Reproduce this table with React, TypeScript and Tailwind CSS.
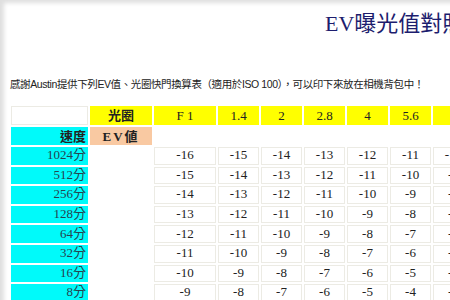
import React from "react"

const apertures = ["F 1", "1.4", "2", "2.8", "4", "5.6", "8", "11", "16"]
const speeds = ["1024分", "512分", "256分", "128分", "64分", "32分", "16分", "8分"]

const serif = "font-['Liberation_Serif','Noto_Sans_CJK_TC',serif]"

export default function App() {
  return (
    <div className="w-[450px] h-[300px] overflow-hidden bg-white">
      <div
        className={`h-full pl-[7px] pt-[6px] shadow-[inset_6px_5px_4px_-2px_rgba(0,0,0,0.13)] ${serif}`}
      >
        {/* Title */}
        <div className="ml-[318px] mt-[5px] whitespace-nowrap text-[22px] leading-[26px] text-[#1d1d6e]">
          EV曝光值對照表
        </div>

        {/* Intro line */}
        <p className="mt-[40px] ml-[3px] whitespace-nowrap text-[10.5px] leading-[14px] text-[#222] font-['Liberation_Sans','Noto_Sans_CJK_TC',sans-serif] tracking-[-0.4px]">
          感謝Austin提供下列EV值、光圈快門換算表（適用於ISO 100），可以印下來放在相機背包中！
        </p>

        {/* Table */}
        <table className="mt-[13px] ml-[2px] border-separate border-spacing-x-[2px] border-spacing-y-[2px] table-fixed text-[13px] leading-none text-[#222]">
          <tbody>
            <tr className="h-[19px]">
              <td className="w-[77px] min-w-[77px] border border-[#ecebe4]"></td>
              <td className="w-[62px] min-w-[62px] bg-[#ffff00] text-center font-bold">光圈</td>
              {apertures.map((a, i) => (
                <td
                  key={a}
                  className={`bg-[#ffff00] text-center ${i === 0 ? "w-[62px] min-w-[62px]" : "w-[41px] min-w-[41px]"}`}
                >
                  {a}
                </td>
              ))}
            </tr>
            <tr className="h-[18px]">
              <td className="bg-[#00fafa] text-right pr-[2px] font-bold">速度</td>
              <td className="bg-[#f9c9a2] text-center font-bold tracking-[2px]">EV値</td>
              {apertures.map((a) => (
                <td key={a}></td>
              ))}
            </tr>
            {speeds.map((s, r) => (
              <tr key={s} className="h-[17.6px]">
                <td className="bg-[#00fafa] text-right pr-[2px] pb-[2px] text-[#26434f]">{s}</td>
                <td></td>
                {apertures.map((a, c) => (
                  <td key={a} className="border border-[#ecebe4] text-center pb-[2px]">
                    {-16 + r + c}
                  </td>
                ))}
              </tr>
            ))}
          </tbody>
        </table>
      </div>
    </div>
  )
}
